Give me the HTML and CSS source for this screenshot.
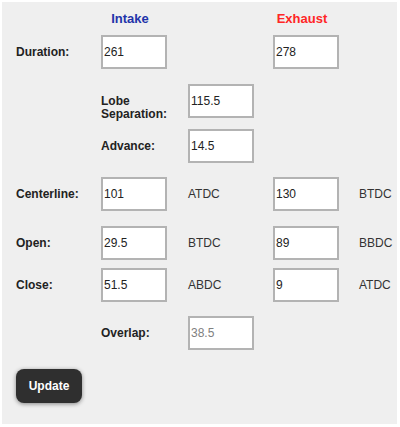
FILE: index.html
```html
<!DOCTYPE html>
<html lang="en">
<head>
  <meta charset="UTF-8">
  <title>Cam Timing</title>
  <meta name="viewport" content="width=device-width, initial-scale=1.0">
  <link rel="stylesheet" href="styles.css">
</head>
<body>

  <form class="panel" action="#" onsubmit="return false;">

    <div class="row heads">
      <span></span>
      <span class="head intake">Intake</span>
      <span></span>
      <span class="head exhaust">Exhaust</span>
    </div>

    <div class="row">
      <label for="int-dur">Duration:</label>
      <input type="text" id="int-dur" value="261">
      <span></span>
      <input type="text" id="exh-dur" value="278">
    </div>

    <div class="row">
      <span></span>
      <label for="lsa">Lobe Separation:</label>
      <input type="text" id="lsa" value="115.5">
    </div>

    <div class="row gap-m">
      <span></span>
      <label for="adv">Advance:</label>
      <input type="text" id="adv" value="14.5">
    </div>

    <div class="row gap-l">
      <label for="int-cl">Centerline:</label>
      <input type="text" id="int-cl" value="101">
      <span class="unit">ATDC</span>
      <input type="text" id="exh-cl" value="130">
      <span class="unit">BTDC</span>
    </div>

    <div class="row">
      <label for="int-open">Open:</label>
      <input type="text" id="int-open" value="29.5">
      <span class="unit">BTDC</span>
      <input type="text" id="exh-open" value="89">
      <span class="unit">BBDC</span>
    </div>

    <div class="row gap-s">
      <label for="int-close">Close:</label>
      <input type="text" id="int-close" value="51.5">
      <span class="unit">ABDC</span>
      <input type="text" id="exh-close" value="9">
      <span class="unit">ATDC</span>
    </div>

    <div class="row gap-l">
      <span></span>
      <label for="overlap">Overlap:</label>
      <input type="text" id="overlap" value="38.5" class="readonly" readonly>
    </div>

    <button type="submit" class="update">Update</button>

  </form>

</body>
</html>
```

FILE: styles.css
```css
html {
  background: #fff;
}
body {
  margin: 0;
  font-family: "Liberation Sans", Arial, sans-serif;
  font-size: 12px;
  color: #222;
}
.panel {
  box-sizing: border-box;
  width: 395px;
  height: 422px;
  margin: 2px;
  padding: 0 0 0 14px;
  background: #efefef;
}
.row {
  display: grid;
  grid-template-columns: 85px 87px 85px 86px auto;
  align-items: baseline;
  height: 34px;
  margin-top: 15px;
}
.row.gap-s {
  margin-top: 8px;
}
.row.gap-m {
  margin-top: 11px;
}
.row.gap-l {
  margin-top: 14px;
}
.row.heads {
  box-sizing: border-box;
  height: 18px;
  margin-top: 0;
  padding-top: 9px;
}
.head {
  width: 58px;
  text-align: center;
  font-size: 13px;
  font-weight: bold;
  line-height: 15px;
}
.intake {
  color: #2233aa;
}
.exhaust {
  color: #ff2626;
}
label {
  font-weight: bold;
  line-height: 13px;
  color: #222;
}
input {
  box-sizing: border-box;
  width: 66px;
  height: 34px;
  margin: 0;
  padding: 0 2px 0 1px;
  border: 2px solid #b3b3b3;
  background: #fff;
  font-family: inherit;
  font-size: 12px;
  color: #222;
}
input.readonly {
  color: #808080;
}
.unit {
  color: #333;
}
.update {
  width: 66px;
  height: 34px;
  margin-top: 19px;
  padding: 0;
  border: none;
  border-radius: 8px;
  background: #2f2f2f;
  box-shadow: 0 1px 4px rgba(0, 0, 0, 0.45);
  color: #fff;
  font-family: inherit;
  font-size: 12px;
  font-weight: bold;
}
```
